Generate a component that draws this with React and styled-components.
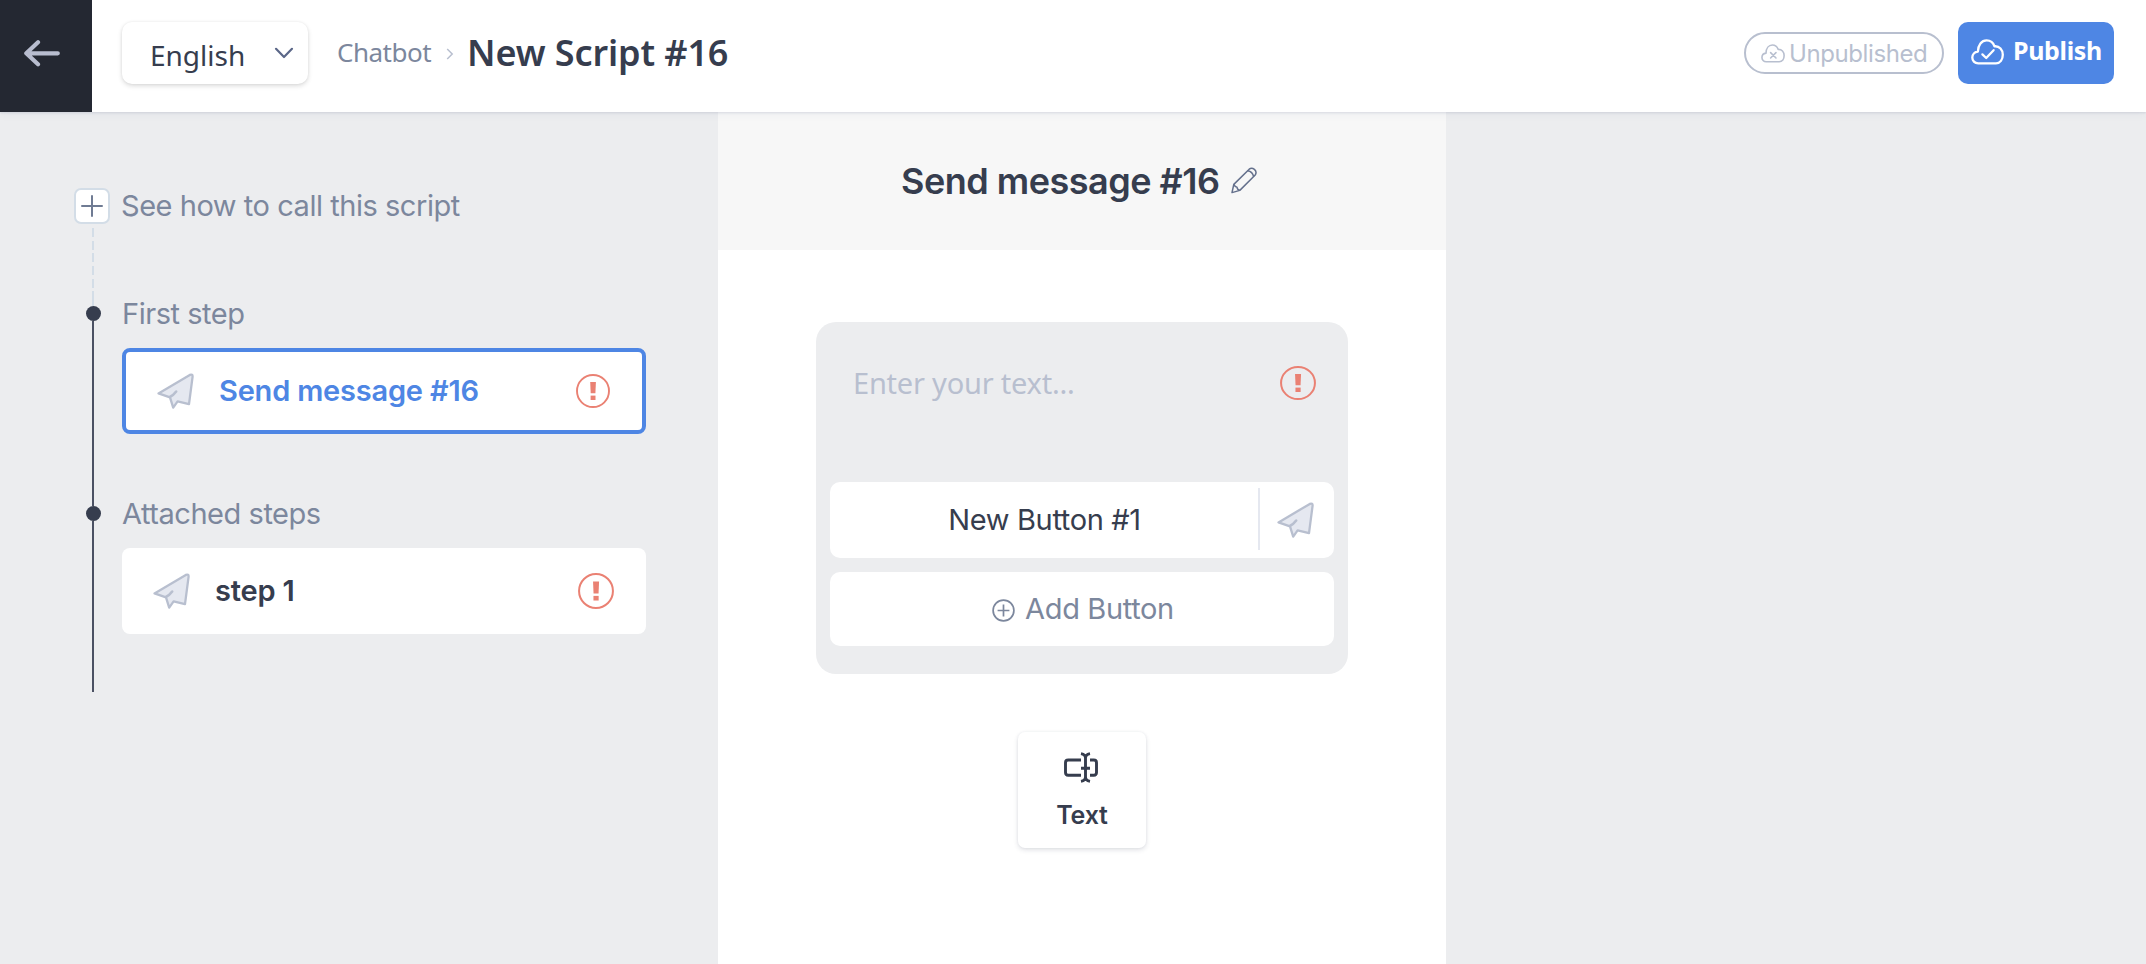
import React from "react";
import styled, { createGlobalStyle } from "styled-components";

const steps = [
  { label: "First step", name: "Send message #16", active: true },
  { label: "Attached steps", name: "step 1", active: false },
];

// Icons
const PlaneIcon = () => (
  <svg width="37" height="37" viewBox="0 0 37 37">
    <path
      d="M1.5 20.4 L32.8 1.9 Q35.8 0.8 35.6 3.6 L32 31.2 L20.6 28.4 L16.2 34.6 L13 24.4 Z"
      fill="#e5e8f0"
      stroke="#b8bfcf"
      strokeWidth="2.3"
      strokeLinejoin="round"
    />
    <path
      d="M12.8 24 Q16.4 22.4 19.2 18.6"
      fill="none"
      stroke="#b8bfcf"
      strokeWidth="2.6"
      strokeLinecap="round"
    />
  </svg>
);

const AlertIcon = ({ width = 36, height = 36 }) => (
  <svg
    width={width}
    height={height}
    viewBox="0 0 34 34"
    preserveAspectRatio="none"
  >
    <circle
      cx="17"
      cy="17"
      r="16"
      fill="none"
      stroke="#ea8173"
      strokeWidth="1.9"
    />
    <path d="M14.2 8 H19.9 L19.4 19.3 H14.7 Z" fill="#ea8173" />
    <rect x="14.6" y="21.6" width="4.9" height="4.4" fill="#ea8173" />
  </svg>
);

const CloudIcon = ({ width, height, line, children }) => (
  <svg
    width={width}
    height={height}
    viewBox="0 0 33 26"
    fill="none"
    stroke="currentColor"
    strokeWidth={line}
    strokeLinecap="round"
    strokeLinejoin="round"
  >
    <path d="M7.2 24.4 C3.6 24.4 1.3 21.7 1.3 18.6 C1.3 15.4 3.7 12.9 6.9 12.5 C7.1 5.8 10.6 1.4 15.6 1.4 C19.5 1.4 22.3 3.8 23.5 7.3 C28.5 6.9 31.8 10.8 31.8 15.8 C31.8 20.5 29.2 24.4 25 24.4 Z" />
    {children}
  </svg>
);

const App = () => {
  return (
    <Page>
      <GlobalStyle />
      <Header>
        <BackButton>
          <svg width="36" height="28" viewBox="0 0 36 28">
            <path
              d="M14 2.3 L2.3 13.3 L14 24.3 M3 13.3 H33.8"
              fill="none"
              stroke="#b8bdcf"
              strokeWidth="4.2"
              strokeLinecap="round"
              strokeLinejoin="round"
            />
          </svg>
        </BackButton>
        <LanguageSelect>
          <Language>English</Language>
          <svg width="20" height="12" viewBox="0 0 20 12">
            <path
              d="M2 1.8 L10 10 L18 1.8"
              fill="none"
              stroke="#5b6788"
              strokeWidth="2.2"
              strokeLinecap="round"
              strokeLinejoin="round"
            />
          </svg>
        </LanguageSelect>
        <Crumb>Chatbot</Crumb>
        <CrumbArrow width="8" height="12" viewBox="0 0 8 12">
          <path
            d="M1.2 1 L6.2 6 L1.2 11"
            fill="none"
            stroke="#b8bfcf"
            strokeWidth="1.5"
          />
        </CrumbArrow>
        <ScriptName>New Script #16</ScriptName>
        <Status>
          <CloudIcon width="24" height="19" line="2.2">
            <path d="M13.2 11.8 L20.6 19.2 M20.6 11.8 L13.2 19.2" />
          </CloudIcon>
          <StatusText>Unpublished</StatusText>
        </Status>
        <PublishButton>
          <CloudIcon width="33" height="26" line="2.3">
            <path d="M11.4 15.4 L15.2 19 L22.6 11.2" />
          </CloudIcon>
          <PublishText>Publish</PublishText>
        </PublishButton>
      </Header>
      <Body>
        <Sidebar>
          <CallRow>
            <PlusBox>
              <svg width="22" height="22" viewBox="0 0 22 22">
                <path
                  d="M11 1 V21 M1 11 H21"
                  stroke="#6f7b93"
                  strokeWidth="2"
                  strokeLinecap="round"
                />
              </svg>
            </PlusBox>
            <Label>See how to call this script</Label>
          </CallRow>
          <DashedLine />
          {steps.map((step) => (
            <StepGroup key={step.label}>
              <Rail>
                <Lead $light={step.active} />
                <Dot />
                <Line />
              </Rail>
              <StepContent>
                <Label>{step.label}</Label>
                <StepCard $active={step.active}>
                  <PlaneIcon />
                  <StepName>{step.name}</StepName>
                  {step.active ? (
                    <AlertIcon width={34} height={34} />
                  ) : (
                    <AlertIcon />
                  )}
                </StepCard>
              </StepContent>
            </StepGroup>
          ))}
        </Sidebar>
        <Editor>
          <EditorHeader>
            <EditorTitle>Send message #16</EditorTitle>
            <svg width="26" height="27" viewBox="0 0 26 27">
              <g
                fill="none"
                stroke="#64708c"
                strokeWidth="1.5"
                strokeLinejoin="round"
              >
                <path d="M1 25.6 L2.8 17.4 L18.2 2.2 Q20.6 0.2 23.4 2.4 Q26.2 5 24.2 8 L8.8 23.4 Z" />
                <path d="M2.8 17.4 Q4 20 6 20.2 Q6.2 22.6 8.8 23.4 M16.6 3.8 Q21.6 4.6 22.6 9.6" />
              </g>
            </svg>
          </EditorHeader>
          <MessageCard>
            <MessageField>
              <Placeholder>Enter your text...</Placeholder>
              <AlertIcon height={34} />
            </MessageField>
            <MessageButton>
              <ButtonLabel>New Button #1</ButtonLabel>
              <ButtonTarget>
                <PlaneIcon />
              </ButtonTarget>
            </MessageButton>
            <AddButton>
              <svg width="23" height="23" viewBox="0 0 23 23">
                <g fill="none" stroke="#7c879d" strokeWidth="1.7">
                  <circle cx="11.5" cy="11.5" r="10.4" />
                  <path d="M11.5 5.6 V17.4 M5.6 11.5 H17.4" />
                </g>
              </svg>
              <AddLabel>Add Button</AddLabel>
            </AddButton>
          </MessageCard>
          <TextTile>
            <svg width="36" height="31" viewBox="0 0 36 31">
              <path
                d="M17 8 H4.2 Q1.5 8 1.5 10.7 V20.5 Q1.5 23.2 4.2 23.2 H17 M26 8 H29.8 Q32.5 8 32.5 10.7 V20.5 Q32.5 23.2 29.8 23.2 H26 M17 1.6 Q21.5 2.4 21.5 6 V25 Q21.5 28.6 17 29.4 M26 1.6 Q21.5 2.4 21.5 6 M26 29.4 Q21.5 28.6 21.5 25 M17 16.3 H26"
                fill="none"
                stroke="#363d4e"
                strokeWidth="2.9"
              />
            </svg>
            <TileLabel>Text</TileLabel>
          </TextTile>
        </Editor>
      </Body>
    </Page>
  );
};

// Styled Components
const GlobalStyle = createGlobalStyle`
  * {
    box-sizing: border-box;
  }

  body {
    margin: 0;
    background: #ecedef;
    font-family: Inter, "Liberation Sans", sans-serif;
    color: #363d4e;
  }

  svg {
    display: block;
    flex-shrink: 0;
  }
`;

const Page = styled.div`
  height: 964px;
  display: flex;
  flex-direction: column;
  overflow: hidden;
  white-space: nowrap;
`;

const Header = styled.header`
  position: relative;
  height: 112px;
  flex-shrink: 0;
  display: flex;
  align-items: flex-start;
  padding-right: 32px;
  background: #fff;
  box-shadow: 0 1px 2px rgba(60, 75, 120, 0.13),
    0 3px 8px rgba(60, 75, 120, 0.05);
`;

const BackButton = styled.div`
  width: 92px;
  height: 112px;
  padding: 40px 0 0 24px;
  background: #242832;
`;

const LanguageSelect = styled.div`
  width: 186px;
  height: 62px;
  margin: 22px 0 0 30px;
  padding: 0 14px 0 28px;
  display: flex;
  align-items: center;
  justify-content: space-between;
  border-radius: 10px;
  background: #fff;
  box-shadow: 0 2px 5px rgba(0, 0, 0, 0.14), 0 0 3px rgba(0, 0, 0, 0.06);
`;

const Language = styled.span`
  margin-top: 4px;
  font: 400 28px/40px "Noto Sans", sans-serif;
`;

const Crumb = styled.span`
  width: 94px;
  margin: 34px 0 0 29px;
  font: 400 26px/36px "Noto Sans", sans-serif;
  letter-spacing: -0.5px;
  color: #7c879d;
`;

const CrumbArrow = styled.svg`
  margin: 48px 0 0 15px;
`;

const ScriptName = styled.h1`
  margin: 29px 0 0 13px;
  font: 600 36px/48px "Noto Sans", sans-serif;
  letter-spacing: -0.1px;
`;

const Status = styled.div`
  width: 200px;
  height: 42px;
  margin: 32px 14px 0 auto;
  padding-left: 15px;
  display: flex;
  align-items: center;
  gap: 4px;
  border: 2px solid #b8bfcf;
  border-radius: 21px;
  color: #b8bfcf;
`;

const StatusText = styled.span`
  font-size: 24px;
  line-height: 38px;
  letter-spacing: -0.4px;
  padding-top: 1px;
`;

const PublishButton = styled.div`
  width: 156px;
  height: 62px;
  margin-top: 22px;
  padding: 17px 0 0 13px;
  display: flex;
  gap: 9px;
  border-radius: 10px;
  background: #4e86e4;
  color: #fff;
`;

const PublishText = styled.span`
  margin-top: -1px;
  font: 700 25px/24px "Noto Sans", sans-serif;
  letter-spacing: -0.35px;
`;

const Body = styled.main`
  flex: 1;
  display: flex;
`;

const Sidebar = styled.aside`
  width: 718px;
  padding: 76px 72px 0 74px;
`;

const CallRow = styled.div`
  display: flex;
  gap: 11px;
`;

const PlusBox = styled.div`
  width: 36px;
  height: 36px;
  display: flex;
  align-items: center;
  justify-content: center;
  border: 2px solid #d3dde7;
  border-radius: 7px;
  background: #fff;
`;

const Label = styled.div`
  font-size: 29px;
  line-height: 36px;
  letter-spacing: -0.46px;
  color: #7c879d;
`;

const DashedLine = styled.div`
  width: 2px;
  height: 68px;
  margin: 4px 0 0 18px;
  background: repeating-linear-gradient(
    #d3dde7 0 9px,
    transparent 9px 12.7px
  );
`;

const StepGroup = styled.section`
  height: 200px;
  display: flex;
  gap: 10px;

  &:last-child {
    height: 196px;
  }
`;

const Rail = styled.div`
  width: 38px;
  display: flex;
  flex-direction: column;
  align-items: center;
`;

const Lead = styled.div`
  width: 2px;
  height: 10px;
  background: ${(props) => (props.$light ? "#d3dde7" : "#4b5163")};
`;

const Dot = styled.div`
  width: 15px;
  height: 15px;
  border-radius: 50%;
  background: #363d4e;
`;

const Line = styled.div`
  flex: 1;
  width: 2px;
  background: #4b5163;
`;

const StepContent = styled.div`
  flex: 1;
`;

const StepCard = styled.div`
  height: 86px;
  margin-top: 16px;
  padding: 0 32px 0 31px;
  display: flex;
  align-items: center;
  border: ${(props) => (props.$active ? "4px solid #4e86e4" : "none")};
  border-radius: 8px;
  background: #fff;
  color: ${(props) => (props.$active ? "#4e86e4" : "#363d4e")};
`;

const StepName = styled.span`
  flex: 1;
  margin-left: 25px;
  font-size: 29px;
  font-weight: 600;
  line-height: 36px;
  letter-spacing: -0.2px;
`;

const Editor = styled.section`
  width: 728px;
  display: flex;
  flex-direction: column;
  align-items: center;
  background: #fff;
`;

const EditorHeader = styled.div`
  width: 100%;
  height: 138px;
  padding: 45px 0 0 183px;
  display: flex;
  gap: 12px;
  background: #f7f7f7;

  svg {
    margin-top: 10px;
  }
`;

const EditorTitle = styled.h2`
  margin: 0;
  width: 318px;
  font-size: 36px;
  font-weight: 600;
  line-height: 48px;
  letter-spacing: -0.5px;
`;

const MessageCard = styled.div`
  width: 532px;
  height: 352px;
  margin-top: 72px;
  padding: 0 14px;
  border-radius: 20px;
  background: #ecedef;
`;

const MessageField = styled.div`
  height: 160px;
  padding: 44px 18px 0 23px;
  display: flex;
  justify-content: space-between;
`;

const Placeholder = styled.span`
  font: 400 29px/34px "Noto Sans", sans-serif;
  letter-spacing: -0.22px;
  color: #b8bfcf;
`;

const MessageButton = styled.div`
  height: 76px;
  padding: 6px 0 8px;
  display: flex;
  border-radius: 10px;
  background: #fff;
`;

const ButtonLabel = styled.div`
  flex: 1;
  padding-left: 1px;
  font-size: 29px;
  line-height: 63px;
  letter-spacing: -0.36px;
  text-align: center;
`;

const ButtonTarget = styled.div`
  width: 76px;
  padding: 14px 0 0 17px;
  border-left: 2px solid #e5e8f0;
`;

const AddButton = styled.div`
  height: 74px;
  margin-top: 14px;
  padding-left: 2px;
  display: flex;
  align-items: center;
  justify-content: center;
  gap: 10px;
  border-radius: 10px;
  background: #fff;
  color: #7c879d;

  svg {
    margin-top: 3px;
  }
`;

const AddLabel = styled.span`
  font-size: 29px;
  line-height: 36px;
  letter-spacing: -0.35px;
`;

const TextTile = styled.div`
  width: 128px;
  height: 116px;
  margin-top: 58px;
  padding-top: 20px;
  display: flex;
  flex-direction: column;
  align-items: center;
  border-radius: 7px;
  background: #fff;
  box-shadow: 0 2px 5px rgba(40, 50, 80, 0.14), 0 0 3px rgba(40, 50, 80, 0.06);
`;

const TileLabel = styled.span`
  margin-top: 17px;
  font-size: 25px;
  font-weight: 600;
  line-height: 30px;
  letter-spacing: -0.2px;
`;

export default App;
